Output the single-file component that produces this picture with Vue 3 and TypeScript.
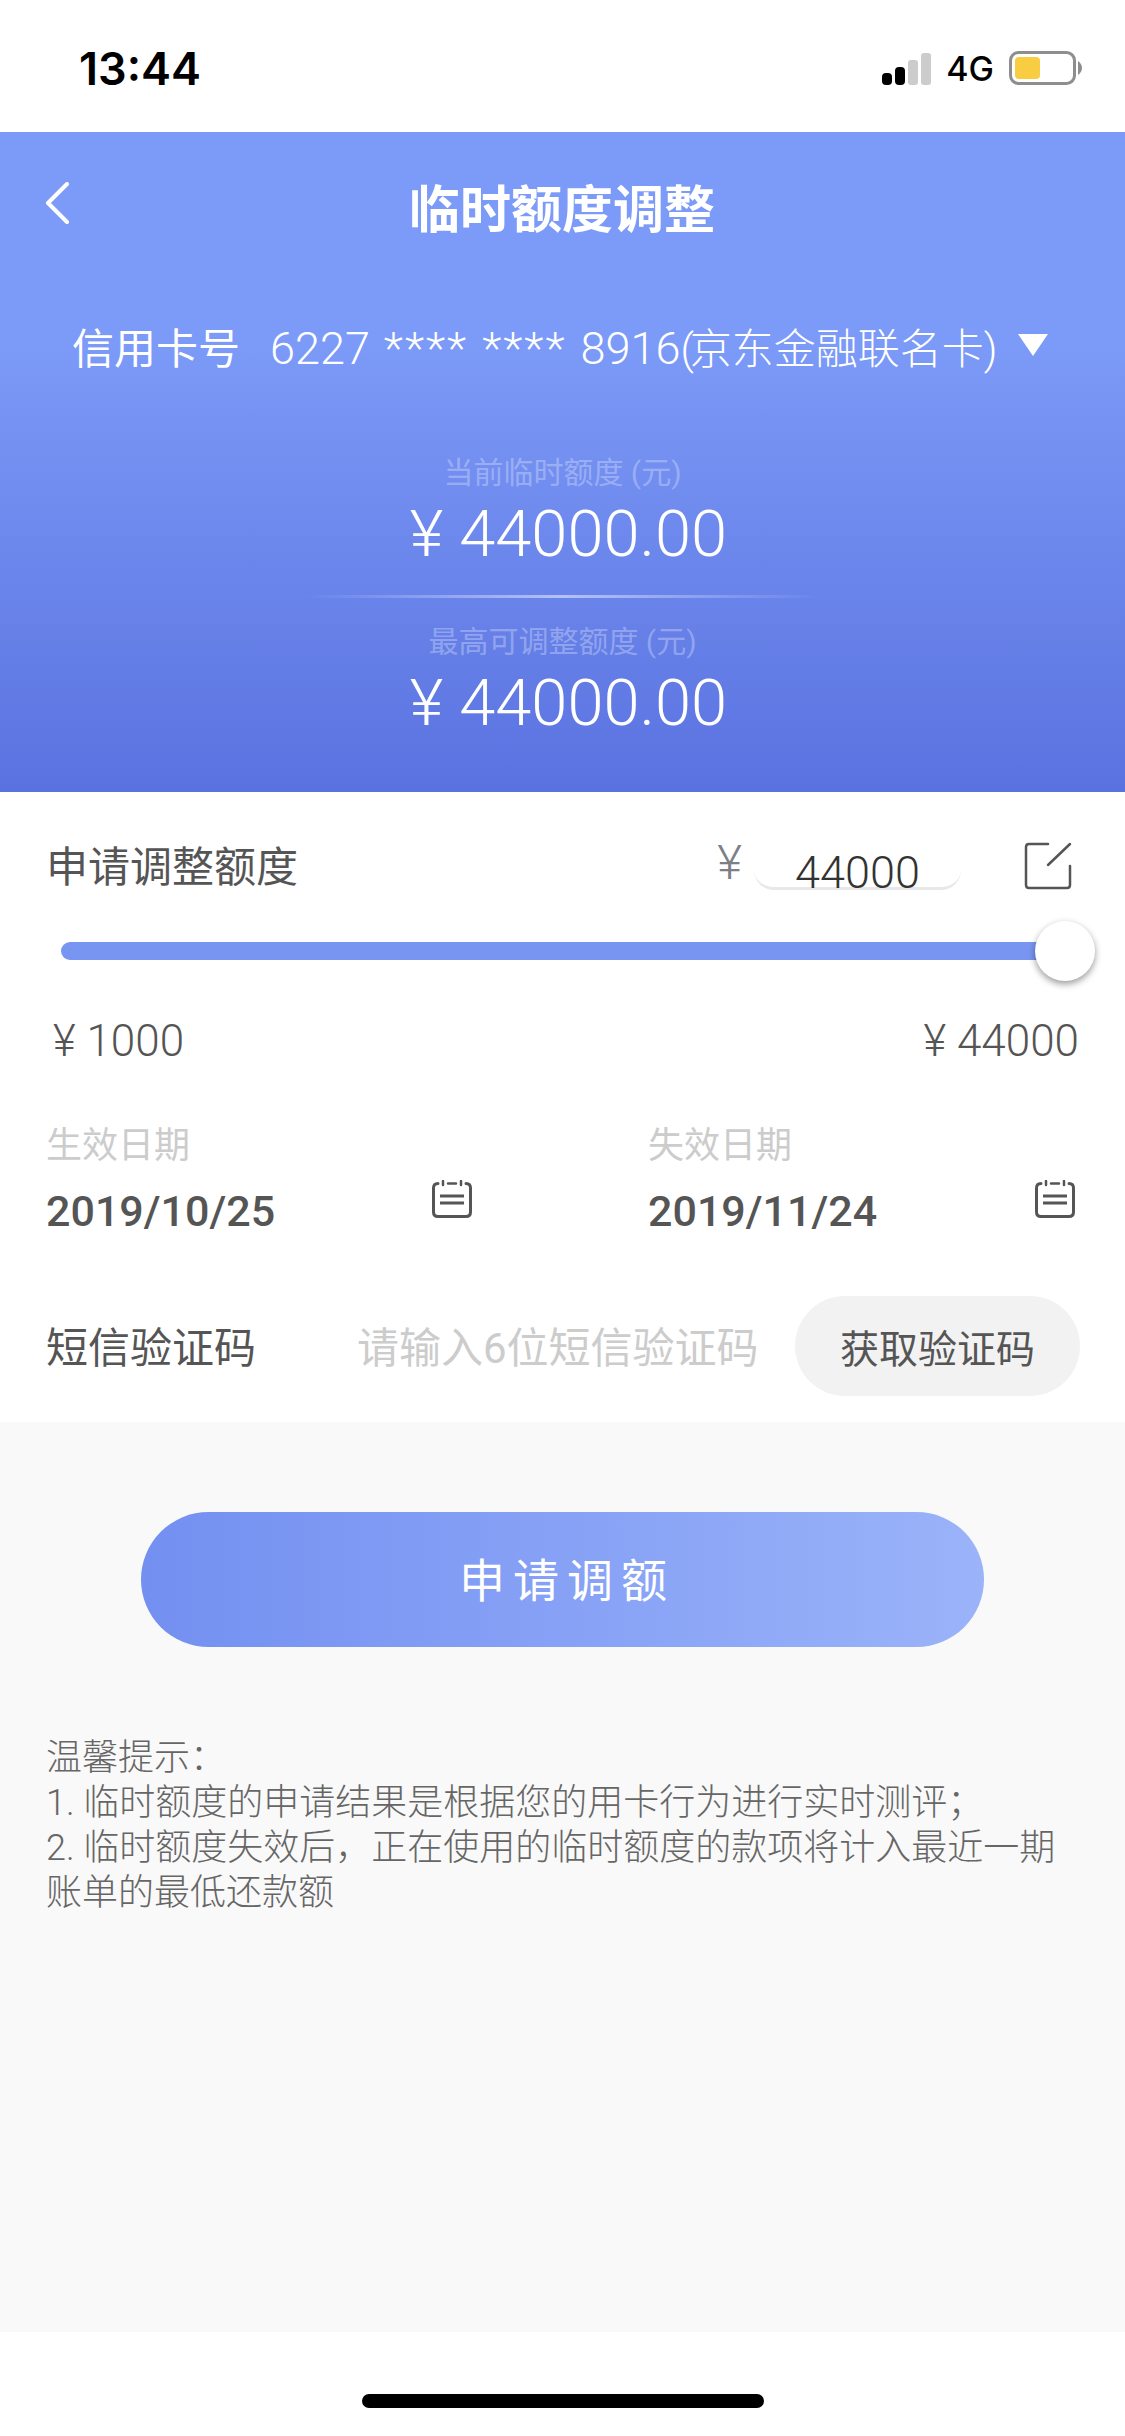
<script setup lang="ts">
const notes: string[] = [
  '温馨提示：',
  '1. 临时额度的申请结果是根据您的用卡行为进行实时测评；',
  '2. 临时额度失效后，正在使用的临时额度的款项将计入最近一期账单的最低还款额',
]

const stats = [
  { label: '当前临时额度 (元)', value: '¥ 44000.00' },
  { label: '最高可调整额度 (元)', value: '¥ 44000.00' },
]

const dates = [
  { label: '生效日期', value: '2019/10/25' },
  { label: '失效日期', value: '2019/11/24' },
]
</script>

<template>
  <div class="page">
    <div class="status">
      <span class="time">13:44</span>
      <div class="status-right">
        <svg width="52" height="32" viewBox="0 0 52 32">
          <rect x="3" y="20" width="10" height="12" rx="4" fill="#000" />
          <rect x="16" y="14" width="10" height="18" rx="4" fill="#000" />
          <rect x="29" y="7" width="10" height="25" rx="3" fill="#ccc" />
          <rect x="42" y="0" width="10" height="32" rx="3" fill="#ccc" />
        </svg>
        <span class="net">4G</span>
        <svg width="74" height="36" viewBox="0 0 74 36">
          <rect x="1.5" y="1.5" width="64" height="31" rx="8" fill="#fff" stroke="#8e8e8e" stroke-width="3" />
          <rect x="6" y="6" width="25" height="22" rx="4" fill="#f8cd41" />
          <path d="M69 10 Q73 13 73 17 Q73 21 69 24 Z" fill="#8e8e8e" />
        </svg>
      </div>
    </div>

    <section class="hero">
      <div class="nav">
        <svg class="back" width="26" height="42" viewBox="0 0 26 42">
          <path d="M23 2 L4 21 L23 40" fill="none" stroke="#fff" stroke-width="4" stroke-linecap="round" stroke-linejoin="round" />
        </svg>
        <span class="title">临时额度调整</span>
      </div>
      <div class="card-row">
        <span class="card-label">信用卡号</span>
        <span class="card-no"><span class="num">6227 <span class="stars">****</span> <span class="stars">****</span> 8916</span><span class="paren">(</span>京东金融联名卡)</span>
        <span class="triangle"></span>
      </div>
      <div class="stats">
        <template v-for="(s, i) in stats" :key="s.label">
          <div v-if="i > 0" class="line"></div>
          <div class="stat-label">{{ s.label }}</div>
          <div class="stat-value">{{ s.value }}</div>
        </template>
      </div>
    </section>

    <section class="form">
      <div class="amount-row">
        <span class="amount-label">申请调整额度</span>
        <span class="yen">¥</span>
        <span class="amount-input">44000</span>
        <svg class="edit" width="48" height="48" viewBox="0 0 48 48">
          <path d="M24 2 H5 Q2 2 2 5 V43 Q2 46 5 46 H43 Q46 46 46 43 V24" fill="none" stroke="#555" stroke-width="2.5" stroke-linecap="round" />
          <path d="M46 2 L24 23" fill="none" stroke="#555" stroke-width="2.5" stroke-linecap="round" />
        </svg>
      </div>
      <div class="slider">
        <div class="track"></div>
        <div class="thumb"></div>
      </div>
      <div class="range">
        <span>¥ 1000</span>
        <span>¥ 44000</span>
      </div>
      <div class="date-row">
        <div v-for="d in dates" :key="d.label" class="date">
          <div class="date-label">{{ d.label }}</div>
          <div class="date-line">
            <span class="date-value">{{ d.value }}</span>
            <svg class="cal" width="40" height="38" viewBox="0 0 40 38">
              <path d="M6 3.5 Q1.5 3.5 1.5 8 V32 Q1.5 36.5 6 36.5 H34 Q38.5 36.5 38.5 32 V8 Q38.5 3.5 34 3.5" fill="none" stroke="#555" stroke-width="3" stroke-linecap="round" />
              <path d="M11 1 V5 M29 1 V5 M16 3.5 H24" fill="none" stroke="#555" stroke-width="2.5" stroke-linecap="round" />
              <path d="M8 16 H32 M8 23 H32" fill="none" stroke="#555" stroke-width="3" />
            </svg>
          </div>
        </div>
      </div>
      <div class="sms-row">
        <span class="sms-label">短信验证码</span>
        <span class="sms-hint">请输入6位短信验证码</span>
        <span class="sms-btn">获取验证码</span>
      </div>
    </section>

    <main class="body">
      <div class="submit">申请调额</div>
      <div class="notes">
        <p v-for="n in notes" :key="n">{{ n }}</p>
      </div>
    </main>

    <footer class="foot">
      <div class="home"></div>
    </footer>
  </div>
</template>

<style>
html,
body {
  margin: 0;
  background: #fff;
}
</style>

<style scoped>
.page {
  width: 1125px;
  height: 2436px;
  display: flex;
  flex-direction: column;
  overflow: hidden;
  background: #fff;
  font-family: Roboto, "Noto Sans CJK SC", sans-serif;
  color: #555;
}

/* status bar */
.status {
  height: 132px;
  flex: none;
  display: flex;
  align-items: center;
  justify-content: space-between;
  padding: 0 42px 0 79px;
  box-sizing: border-box;
}
.time {
  font-family: Inter, sans-serif;
  font-size: 45px;
  font-weight: 600;
  color: #000;
  margin-top: 4px;
}
.status-right {
  display: flex;
  align-items: center;
  gap: 15px;
  margin-top: 5px;
}
.net {
  font-family: Inter, sans-serif;
  font-size: 34px;
  font-weight: 500;
  color: #000;
}

/* blue header */
.hero {
  height: 660px;
  flex: none;
  color: #fff;
  background: linear-gradient(180deg, #7c9af7 0%, #7c9af7 32%, #5a72e0 100%);
}
.nav {
  height: 147px;
  display: flex;
  align-items: center;
  justify-content: center;
  position: relative;
}
.back {
  position: absolute;
  left: 44px;
  top: 50px;
}
.title {
  font-size: 51px;
  font-weight: 700;
  font-family: "Noto Sans CJK SC", sans-serif;
  margin-left: -1px;
}
.card-row {
  height: 132px;
  display: flex;
  align-items: center;
  padding-left: 72px;
  font-size: 42px;
}
.card-label {
  width: 198px;
  flex: none;
}
.card-no {
  white-space: nowrap;
  font-weight: 300;
}
.num {
  font-size: 45px;
  word-spacing: 3px;
}
.stars {
  letter-spacing: 2px;
}
.paren {
  margin-right: -4px;
}
.triangle {
  width: 0;
  height: 0;
  margin-left: 20px;
  border-left: 15px solid transparent;
  border-right: 15px solid transparent;
  border-top: 22px solid #fff;
}
.stats {
  display: flex;
  flex-direction: column;
  align-items: center;
  padding-top: 39px;
}
.stat-label {
  font-size: 30px;
  line-height: 46px;
  color: rgba(255, 255, 255, 0.3);
  white-space: nowrap;
}
.stat-value {
  font-size: 65px;
  font-weight: 300;
  line-height: 76px;
  padding-left: 12px;
  white-space: nowrap;
}
.line {
  width: 520px;
  height: 3px;
  margin: 23px 0 21px;
  background: linear-gradient(90deg, rgba(255, 255, 255, 0), rgba(255, 255, 255, 0.5), rgba(255, 255, 255, 0));
}

/* form */
.form {
  height: 630px;
  flex: none;
  padding: 0 45px 0 46px;
  box-sizing: border-box;
}
.amount-row {
  height: 132px;
  display: flex;
  align-items: center;
  padding-top: 12px;
  box-sizing: border-box;
  position: relative;
}
.amount-label {
  font-size: 42px;
  margin-top: -2px;
  flex: 1;
}
.yen {
  font-size: 48px;
  font-weight: 300;
  color: #7d7f87;
  margin-right: 12px;
  margin-top: -3px;
}
.amount-input {
  width: 207px;
  height: 50px;
  align-self: flex-start;
  margin-top: 36px;
  box-sizing: border-box;
  text-align: center;
  font-size: 45px;
  font-weight: 300;
  line-height: 66px;
  color: #333;
  border-bottom: 3px solid #e8e8e8;
  border-radius: 0 0 20px 20px;
}
.edit {
  margin: 4px 8px 0 63px;
}
.slider {
  height: 18px;
  margin: 18px 15px 0;
  position: relative;
}
.track {
  height: 18px;
  width: 100%;
  border-radius: 9px;
  background: #7895f1;
}
.thumb {
  position: absolute;
  right: -30px;
  top: -21px;
  width: 60px;
  height: 60px;
  border-radius: 50%;
  background: #fff;
  box-shadow: 0 3px 7px rgba(0, 0, 0, 0.4);
}
.range {
  display: flex;
  justify-content: space-between;
  font-size: 44px;
  font-weight: 300;
  line-height: 50px;
  margin-top: 56px;
  padding: 0 1px 0 7px;
}
.date-row {
  display: flex;
  margin-top: 55px;
}
.date {
  width: 602px;
  flex: none;
}
.date:last-child {
  width: 432px;
}
.date-label {
  font-size: 36px;
  line-height: 50px;
  color: #ccc;
}
.date-line {
  display: flex;
  align-items: flex-start;
  justify-content: space-between;
  padding-right: 176px;
  margin-top: 15px;
}
.date:last-child .date-line {
  padding-right: 5px;
}
.date-value {
  font-size: 43px;
  line-height: 50px;
  font-weight: 500;
  color: #555;
}
.cal {
  margin-top: -6px;
}
.sms-row {
  display: flex;
  align-items: center;
  margin-top: 60px;
  height: 100px;
}
.sms-label {
  width: 311px;
  flex: none;
  font-size: 42px;
  margin-top: -3px;
}
.sms-hint {
  flex: 1;
  font-size: 42px;
  color: #ccc;
  white-space: nowrap;
  margin-top: -3px;
}
.sms-btn {
  width: 285px;
  height: 100px;
  flex: none;
  display: flex;
  align-items: center;
  justify-content: center;
  border-radius: 50px;
  background: #f2f2f2;
  font-size: 39px;
}

/* lower area */
.body {
  flex: 1;
  background: #f9f9f9;
  padding: 90px 0 0;
}
.submit {
  width: 843px;
  height: 135px;
  margin-left: 141px;
  box-sizing: border-box;
  padding: 0 0 5px 9px;
  border-radius: 68px;
  display: flex;
  align-items: center;
  justify-content: center;
  color: #fff;
  font-size: 46px;
  letter-spacing: 8px;
  background: linear-gradient(90deg, #7390f1, #9ab3f9);
}
.notes {
  margin-top: 89px;
  padding: 0 46px;
  font-size: 36px;
  font-weight: 300;
  line-height: 45px;
  color: #666;
}
.notes p {
  margin: 0;
}
.foot {
  height: 104px;
  flex: none;
  background: #fff;
  display: flex;
  justify-content: center;
  padding-top: 62px;
  box-sizing: border-box;
}
.home {
  width: 402px;
  height: 14px;
  border-radius: 7px;
  background: #000;
}
</style>
